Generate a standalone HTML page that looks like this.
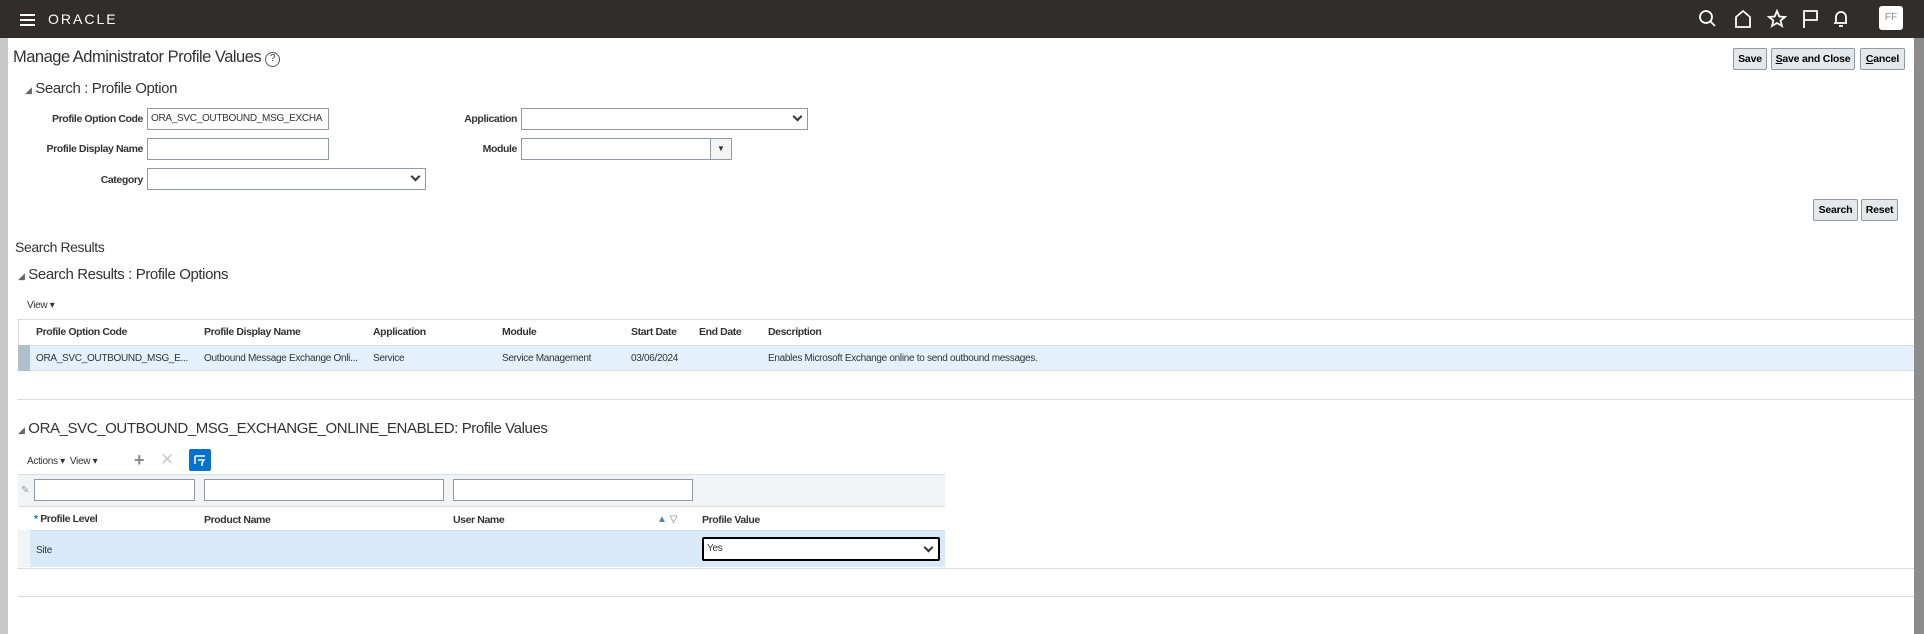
<!DOCTYPE html>
<html><head><meta charset="utf-8"><style>
*{box-sizing:border-box;margin:0;padding:0}
body{width:1924px;height:634px;overflow:hidden;background:#fff;font-family:"Liberation Sans",Arial,sans-serif;color:#333;position:relative}
.a{position:absolute}
.hdr{left:0;top:0;width:1924px;height:38px;background:#312d2a}
.lb{left:0;top:38px;width:8px;height:596px;background:#c8c8c8}
.rb{left:1914px;top:38px;width:10px;height:596px;background:#8c8c8c}
.lbl{font-size:10.5px;font-weight:bold;color:#333;text-align:right;letter-spacing:-0.4px}
.inp{border:1px solid #8e9aa6;background:#fff;height:22px;font-size:10px;padding:4px 3px;color:#333;letter-spacing:-0.3px;overflow:hidden;white-space:nowrap}
.btn{border:1px solid #8e9aa6;border-radius:2px;background:#e4e8ea;font-size:10.5px;font-weight:bold;color:#000;text-align:center;line-height:20px;height:22px;letter-spacing:-0.2px}
.h2{font-size:15px;color:#333;letter-spacing:-0.4px}
.tri{font-size:9px;color:#666}
.th{font-size:10.5px;font-weight:bold;color:#333;letter-spacing:-0.4px}
.td{font-size:10px;color:#333;letter-spacing:-0.3px}
.ln{height:1px;background:#d6dfe6}
.chev{position:absolute;right:6px;top:4px;width:7px;height:7px;border-right:2px solid #333;border-bottom:2px solid #333;transform:rotate(45deg)}
</style></head><body>
<div class="a hdr"></div>
<div class="a" style="left:20px;top:14px;width:15px;height:2px;background:#fff;box-shadow:0 5px 0 #fff,0 10px 0 #fff"></div>
<div class="a" style="left:48px;top:11px;color:#fff;font-size:14px;letter-spacing:2px">ORACLE</div>
<svg class="a" style="left:1697px;top:8px" width="150" height="22" fill="none" stroke="#fff" stroke-width="1.8">
<circle cx="9" cy="9" r="6"/><line x1="13.5" y1="13.5" x2="18" y2="18"/>
<path d="M39 19 V9 L46 3 L53 9 V19 Z"/>
<path d="M80 3 L82.3 8.5 L88 9 L83.6 12.6 L85 18 L80 15 L75 18 L76.4 12.6 L72 9 L77.7 8.5 Z"/>
<path d="M107 20 V3 H120 V12 H107"/>
<path d="M139 15 V9 a5 5 0 0 1 10 0 V15 H137 H151 M142 18 H146"/>
</svg>
<div class="a" style="left:1879px;top:6px;width:24px;height:24px;background:#fff;border-radius:3px;font-size:10px;color:#888;text-align:center;line-height:24px">FF</div>
<div class="a lb"></div><div class="a rb"></div>

<div class="a" style="left:13px;top:48px;font-size:16.5px;color:#333;letter-spacing:-0.5px">Manage Administrator Profile Values <span style="display:inline-block;width:15px;height:15px;border:1.5px solid #555;border-radius:50%;font-size:10px;text-align:center;line-height:12px;vertical-align:1px;letter-spacing:0">?</span></div>
<div class="a btn" style="left:1733px;top:48px;width:34px">Save</div>
<div class="a btn" style="left:1771px;top:48px;width:84px"><u>S</u>ave and Close</div>
<div class="a btn" style="left:1860px;top:48px;width:45px"><u>C</u>ancel</div>

<div class="a h2" style="left:25px;top:80px"><span class="tri">◢</span> Search : Profile Option</div>
<div class="a lbl" style="left:20px;top:113px;width:123px">Profile Option Code</div>
<div class="a inp" style="left:147px;top:108px;width:182px">ORA_SVC_OUTBOUND_MSG_EXCHA</div>
<div class="a lbl" style="left:400px;top:113px;width:117px">Application</div>
<div class="a inp" style="left:521px;top:108px;width:287px"><span class="chev"></span></div>
<div class="a lbl" style="left:20px;top:143px;width:123px">Profile Display Name</div>
<div class="a inp" style="left:147px;top:138px;width:182px"></div>
<div class="a lbl" style="left:400px;top:143px;width:117px">Module</div>
<div class="a inp" style="left:521px;top:138px;width:211px"></div>
<div class="a" style="left:710px;top:138px;width:22px;height:22px;border:1px solid #8e9aa6;background:#f4f4f4;font-size:8px;text-align:center;line-height:20px">▼</div>
<div class="a lbl" style="left:20px;top:174px;width:123px">Category</div>
<div class="a inp" style="left:147px;top:168px;width:279px"><span class="chev"></span></div>
<div class="a btn" style="left:1813px;top:199px;width:45px">Search</div>
<div class="a btn" style="left:1861px;top:199px;width:37px">Reset</div>

<div class="a" style="left:15px;top:239px;font-size:14px;letter-spacing:-0.4px">Search Results</div>
<div class="a h2" style="left:18px;top:266px"><span class="tri">◢</span> Search Results : Profile Options</div>
<div class="a" style="left:27px;top:300px;font-size:10px;letter-spacing:-0.3px">View ▾</div>
<div class="a ln" style="left:18px;top:319px;width:1896px"></div>
<div class="a" style="left:18px;top:319px;width:1px;height:52px;background:#d6dfe6"></div>
<div class="a th" style="left:36px;top:326px">Profile Option Code</div>
<div class="a th" style="left:204px;top:326px">Profile Display Name</div>
<div class="a th" style="left:373px;top:326px">Application</div>
<div class="a th" style="left:502px;top:326px">Module</div>
<div class="a th" style="left:631px;top:326px">Start Date</div>
<div class="a th" style="left:699px;top:326px">End Date</div>
<div class="a th" style="left:768px;top:326px">Description</div>
<div class="a" style="left:18px;top:345px;width:1896px;height:26px;background:#e4f0fb;border-top:1px solid #d6dfe6;border-bottom:1px solid #d6dfe6"></div>
<div class="a" style="left:18px;top:345px;width:12px;height:26px;background:#b0bfcc"></div>
<div class="a td" style="left:36px;top:353px">ORA_SVC_OUTBOUND_MSG_E...</div>
<div class="a td" style="left:204px;top:353px">Outbound Message Exchange Onli...</div>
<div class="a td" style="left:373px;top:353px">Service</div>
<div class="a td" style="left:502px;top:353px">Service Management</div>
<div class="a td" style="left:631px;top:353px">03/06/2024</div>
<div class="a td" style="left:768px;top:353px">Enables Microsoft Exchange online to send outbound messages.</div>
<div class="a ln" style="left:18px;top:399px;width:1896px"></div>

<div class="a h2" style="left:18px;top:420px"><span class="tri">◢</span> ORA_SVC_OUTBOUND_MSG_EXCHANGE_ONLINE_ENABLED: Profile Values</div>
<div class="a" style="left:27px;top:456px;font-size:10px;letter-spacing:-0.3px">Actions ▾ &nbsp;View ▾</div>
<div class="a" style="left:134px;top:450px;font-size:18px;color:#888;font-weight:bold">+</div>
<div class="a" style="left:160px;top:450px;font-size:17px;color:#ccc">✕</div>
<div class="a" style="left:189px;top:449px;width:22px;height:22px;background:#0572ce;border-radius:2px"></div>
<svg class="a" style="left:192px;top:452px" width="16" height="16" fill="none" stroke="#fff" stroke-width="1.5"><path d="M3 4H13M3 4V12M6 8H12L10 11V14"/></svg>
<div class="a" style="left:18px;top:474px;width:927px;height:33px;background:#f1f3f5;border-top:1px solid #d6dfe6"></div>
<div class="a" style="left:21px;top:485px;font-size:10px;color:#999">✎</div>
<div class="a inp" style="left:34px;top:479px;width:161px;height:22px"></div>
<div class="a inp" style="left:204px;top:479px;width:240px;height:22px"></div>
<div class="a inp" style="left:453px;top:479px;width:240px;height:22px"></div>
<div class="a ln" style="left:18px;top:506px;width:927px"></div>
<div class="a th" style="left:34px;top:513px"><span style="color:#0572ce">*</span> Profile Level</div>
<div class="a th" style="left:204px;top:514px">Product Name</div>
<div class="a th" style="left:453px;top:514px">User Name</div>
<div class="a" style="left:657px;top:514px;font-size:10px;color:#5a7fa8">▲ <span style="color:#777">▽</span></div>
<div class="a th" style="left:702px;top:514px">Profile Value</div>
<div class="a" style="left:18px;top:530px;width:927px;height:37px;background:#d8eafa;border-top:1px solid #d6dfe6"></div>
<div class="a" style="left:18px;top:530px;width:12px;height:37px;background:#f1f3f5"></div>
<div class="a td" style="left:36px;top:545px">Site</div>
<div class="a inp" style="left:702px;top:537px;width:238px;height:24px;border:2px solid #000;border-radius:2px">Yes<span class="chev" style="top:5px"></span></div>
<div class="a ln" style="left:18px;top:568px;width:1896px"></div>
<div class="a ln" style="left:18px;top:596px;width:1896px"></div>
</body></html>
